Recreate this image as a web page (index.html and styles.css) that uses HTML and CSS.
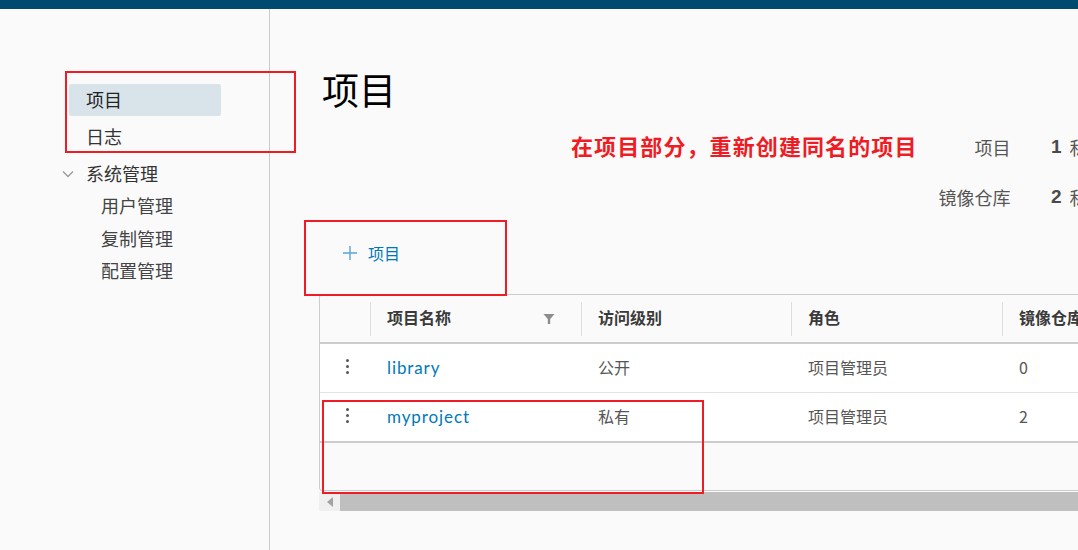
FILE: index.html
```html
<!DOCTYPE html>
<html lang="zh">
<head>
<meta charset="utf-8">
<title>项目</title>
<link rel="stylesheet" href="styles.css">
</head>
<body>
<div class="topbar"></div>
<div class="layout">
  <aside class="sidebar">
    <nav class="nav">
      <a class="nav-item active">项目</a>
      <a class="nav-item">日志</a>
      <div class="nav-group">
        <svg class="chev" width="12" height="8" viewBox="0 0 12 8"><path d="M1 1.5 L6 6.5 L11 1.5" fill="none" stroke="#9a9a9a" stroke-width="1.3"/></svg>
        <span>系统管理</span>
      </div>
      <a class="nav-sub">用户管理</a>
      <a class="nav-sub">复制管理</a>
      <a class="nav-sub">配置管理</a>
    </nav>
    <div class="annot annot-nav"></div>
  </aside>
  <main class="main">
    <h1 class="title">项目</h1>
    <div class="summary">
      <div class="note">在项目部分，重新创建同名的项目</div>
      <div class="stats">
        <div class="stat-row"><span class="stat-label">项目</span><span class="stat-num">1</span><span class="stat-type">私有</span></div>
        <div class="stat-row"><span class="stat-label">镜像仓库</span><span class="stat-num">2</span><span class="stat-type">私有</span></div>
      </div>
    </div>
    <div class="toolbar">
      <button class="add-btn">
        <svg width="16" height="16" viewBox="0 0 16 16"><path d="M8 1 V15 M1 8 H15" stroke="#5aa5d6" stroke-width="1.4" fill="none"/></svg>
        <span>项目</span>
      </button>
    </div>
    <div class="datagrid">
      <div class="row head">
        <div class="cell c-act"></div>
        <div class="cell"><i class="sep"></i><span class="th-text">项目名称</span>
          <svg class="filter" width="12" height="12" viewBox="0 0 12 12"><path d="M0.5 1 H11.5 L7.2 6 V11 H4.8 V6 Z" fill="#8c8c8c"/></svg>
        </div>
        <div class="cell"><i class="sep"></i><span class="th-text">访问级别</span></div>
        <div class="cell"><i class="sep"></i><span class="th-text">角色</span></div>
        <div class="cell"><i class="sep"></i><span class="th-text">镜像仓库数</span></div>
        <div class="cell"><i class="sep"></i><span class="th-text">创建时间</span></div>
      </div>
      <div class="row body">
        <div class="cell c-act"><span class="dots"><i></i><i></i><i></i></span></div>
        <div class="cell pad"><a class="link">library</a></div>
        <div class="cell pad">公开</div>
        <div class="cell pad">项目管理员</div>
        <div class="cell pad">0</div>
        <div class="cell pad"></div>
      </div>
      <div class="row body last">
        <div class="cell c-act"><span class="dots"><i></i><i></i><i></i></span></div>
        <div class="cell pad"><a class="link">myproject</a></div>
        <div class="cell pad">私有</div>
        <div class="cell pad">项目管理员</div>
        <div class="cell pad">2</div>
        <div class="cell pad"></div>
      </div>
      <div class="foot"></div>
    </div>
    <div class="hscroll">
      <div class="hs-btn"><svg width="6" height="10" viewBox="0 0 6 10"><path d="M6 0 V10 L0 5 Z" fill="#a3a3a3"/></svg></div>
      <div class="hs-thumb"></div>
    </div>
    <div class="annot annot-add"></div>
    <div class="annot annot-row"></div>
  </main>
</div>
</body>
</html>
```
FILE: styles.css
```css
* { box-sizing: border-box; }
html, body { margin: 0; padding: 0; }
body {
  width: 1078px;
  height: 550px;
  overflow: hidden;
  background: #fafafa;
  font-family: "Noto Sans CJK SC", "Noto Sans", sans-serif;
  color: #565656;
}
.topbar { height: 9px; background: #004a70; }
.layout { display: flex; height: 541px; }
.sidebar {
  position: relative;
  width: 270px;
  flex: none;
  border-right: 1px solid #cccccc;
  padding: 75px 0 0 69px;
}
.nav { display: flex; flex-direction: column; width: 152px; }
.nav-item {
  display: flex;
  align-items: center;
  height: 32px;
  padding: 0 0 3px 17px;
  font-size: 18px;
  color: #333;
  margin-bottom: 5px;
  border-radius: 2px;
}
.nav-item.active { background: #d9e4ea; color: #222; }
.nav-group {
  display: flex;
  align-items: center;
  height: 32px;
  padding-bottom: 2px;
  margin-left: -7px;
  font-size: 18px;
  color: #333;
}
.chev { margin-right: 12px; margin-top: 2px; }
.nav-sub {
  display: flex;
  align-items: center;
  height: 32.5px;
  padding: 0 0 2px 32px;
  font-size: 18px;
  color: #444;
}
.main { position: relative; flex: 1; overflow: hidden; padding-left: 49px; }
.title {
  margin: 61px 0 0 3px;
  height: 38px;
  line-height: 38px;
  font-size: 37px;
  font-weight: 400;
  color: #000;
}
.summary { display: flex; margin-top: 16px; }
.note {
  margin: 6px 0 0 252px;
  font-size: 22px;
  font-weight: 700;
  color: #ee1c25;
  line-height: 30px;
  white-space: nowrap;
  letter-spacing: 1.1px;
}
.stats { margin-left: 0px; display: flex; flex-direction: column; gap: 24px; padding-top: 10px; }
.stat-row { display: flex; align-items: center; height: 26px; white-space: nowrap; }
.stat-label { width: 93px; text-align: right; font-size: 18px; color: #565656; }
.stat-num { width: 51px; text-align: right; font-size: 19px; font-weight: 700; color: #4a4a4a; font-family: "Liberation Sans", sans-serif; }
.stat-type { margin-left: 8px; font-size: 18px; color: #565656; }
.toolbar { margin-top: 28px; height: 30px; display: flex; align-items: center; }
.add-btn {
  display: flex;
  align-items: center;
  gap: 10px;
  margin-left: 23px;
  padding: 0;
  border: 0;
  background: none;
  font-family: inherit;
  font-size: 16px;
  color: #0079b8;
}
.datagrid {
  margin-top: 26px;
  width: 1120px;
  border: 1px solid #cccccc;
  border-radius: 3px;
  background: #fafafa;
}
.row { display: grid; grid-template-columns: 50px 211px 210px 211px 211px 226px; }
.row.head { height: 49px; border-bottom: 2px solid #cccccc; }
.row.body { height: 49px; background: #fff; border-bottom: 1px solid #e3e3e3; }
.row.body.last { border-bottom: 2px solid #cccccc; height: 50px; }
.cell { display: flex; align-items: center; font-size: 16px; color: #565656; padding-bottom: 2px; }
.cell.pad { padding-left: 17px; }
.head .cell { font-weight: 700; color: #3a3a3a; padding-bottom: 3px; }
.sep { display: block; width: 1px; height: 34px; background: #dddddd; margin-right: 16px; margin-top: 3px; }
.th-text { flex: 1; }
.filter { margin-right: 26px; margin-top: 3px; }
.c-act { justify-content: center; padding-left: 4px; }
.dots { display: flex; flex-direction: column; gap: 3px; margin-top: -2px; }
.dots i { display: block; width: 3px; height: 3px; border-radius: 50%; background: #565656; }
.link { color: #0079b8; font-family: "Lato", "Noto Sans", sans-serif; font-size: 17px; letter-spacing: 0.9px; }
.foot { height: 47px; }
.hscroll { display: flex; margin-top: 1px; height: 19px; width: 1120px; }
.hs-btn { width: 21px; background: #f0f0f0; display: flex; align-items: center; justify-content: center; }
.hs-thumb { flex: 1; background: #bfbfbf; }
.annot { position: absolute; border: 2px solid #ee1c25; pointer-events: none; }
.annot-nav { left: 65px; top: 62px; width: 231px; height: 82px; }
.annot-add { left: 34px; top: 211px; width: 203px; height: 76px; }
.annot-row { left: 52px; top: 391px; width: 382px; height: 94px; }
```
